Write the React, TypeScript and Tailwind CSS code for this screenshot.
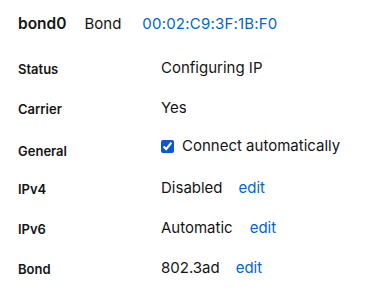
import React from "react";

export default function App() {
  const font = { fontFamily: 'Inter, "Open Sans", sans-serif' };
  const label = "text-[13px] font-semibold leading-[24px]";
  const value = "text-[15px] leading-[22px]";
  return (
    <div className="w-[370px] h-[296px] bg-white text-[#151515] pl-[18px] pt-[12px]" style={font}>
      <div className="flex items-baseline h-[24px] text-[15px]">
        <span className="font-semibold text-[15.5px]">bond0</span>
        <span className="ml-[18px]">Bond</span>
        <span className="ml-[21px] text-[#0066cc] tracking-[0.2px]">00:02:C9:3F:1B:F0</span>
      </div>
      <div className="grid grid-cols-[143px_1fr] mt-[21px] auto-rows-[40px]">
        <div className={label}>Status</div>
        <div className={value}>Configuring IP</div>
        <div className={label}>Carrier</div>
        <div className={value}>Yes</div>
        <div className={`${label} pt-[2px]`}>General</div>
        <div className={`${value} flex items-center self-start -mt-[2px] h-[22px]`}>
          <input type="checkbox" defaultChecked className="w-[13px] h-[13px] m-0 mr-[8px] accent-[#0b57d0]" />
          <span>Connect automatically</span>
        </div>
        <div className={label}>IPv4</div>
        <div className={value}>Disabled<span className="ml-[16px] text-[#0066cc]">edit</span></div>
        <div className={label}>IPv6</div>
        <div className={value}>Automatic<span className="ml-[17px] text-[#0066cc]">edit</span></div>
        <div className={label}>Bond</div>
        <div className={value}>802.3ad<span className="ml-[16px] text-[#0066cc]">edit</span></div>
      </div>
    </div>
  );
}
